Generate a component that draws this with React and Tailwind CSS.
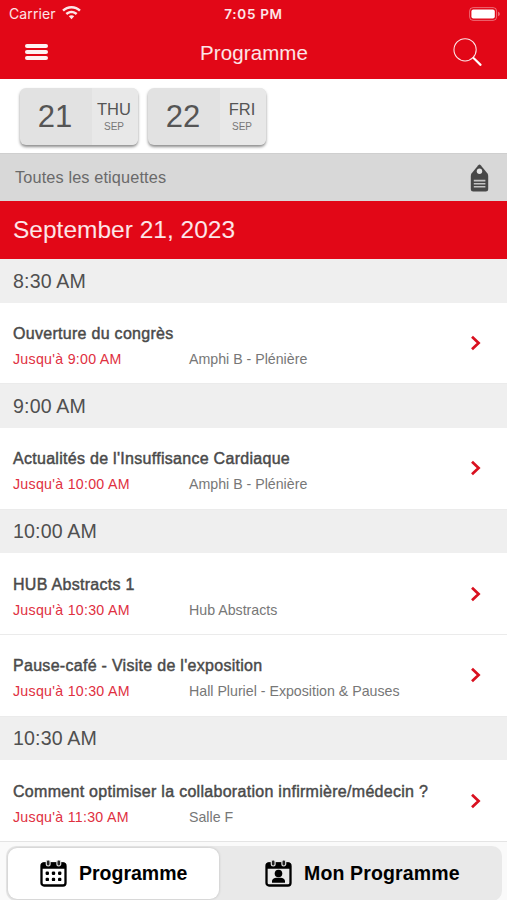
import React, { useState } from "react";

const schedule = [
  {
    time: "8:30 AM",
    sessions: [
      { title: "Ouverture du congrès", until: "9:00 AM", room: "Amphi B - Plénière" },
    ],
  },
  {
    time: "9:00 AM",
    sessions: [
      { title: "Actualités de l'Insuffisance Cardiaque", until: "10:00 AM", room: "Amphi B - Plénière" },
    ],
  },
  {
    time: "10:00 AM",
    sessions: [
      { title: "HUB Abstracts 1", until: "10:30 AM", room: "Hub Abstracts" },
      { title: "Pause-café - Visite de l'exposition", until: "10:30 AM", room: "Hall Pluriel - Exposition & Pauses" },
    ],
  },
  {
    time: "10:30 AM",
    sessions: [
      { title: "Comment optimiser la collaboration infirmière/médecin ?", until: "11:30 AM", room: "Salle F" },
    ],
  },
];

const days = [
  { day: "21", name: "THU", month: "SEP" },
  { day: "22", name: "FRI", month: "SEP" },
];

const StatusBar = () => (
  <div className="grid h-[27px] grid-cols-3 items-center px-[9px] font-['Inter',sans-serif] text-white/90">
    <div className="flex items-center gap-[6px]">
      <span className="text-[14px] tracking-[0.1px]">Carrier</span>
      <svg className="-mt-px h-[14px] w-[19px]" viewBox="0 0 19 14" fill="currentColor">
        <path d="M9.500 0C5.900 0 2.600 1.400.2 3.700l1.700 1.800C3.900 3.600 6.600 2.500 9.500 2.500s5.600 1.100 7.600 3l1.700-1.800C16.400 1.400 13.100 0 9.500 0Z" />
        <path d="M9.500 4.700c-2.300 0-4.400.9-6 2.400l1.700 1.800c1.100-1.100 2.600-1.700 4.300-1.700s3.200.6 4.300 1.700l1.700-1.800c-1.600-1.500-3.700-2.400-6-2.400Z" />
        <path d="M9.500 9.200c-1.100 0-2 .4-2.700 1.100l2.700 3 2.700-3c-.7-.7-1.600-1.100-2.700-1.100Z" />
      </svg>
    </div>
    <span className="pt-px text-center text-[13.500px] font-semibold tracking-[0.700px]">7:05 PM</span>
    <svg className="-mr-[3px] h-[14px] w-[32px] justify-self-end" viewBox="0 0 32 14">
      <rect x="0.600" y="0.600" width="27" height="12.800" rx="3.500" fill="none" stroke="#fff" strokeOpacity="0.4" />
      <rect x="2.400" y="2.400" width="23.400" height="9.200" rx="2" fill="#fff" />
      <path d="M29.200 4.800v4.400c1.100-.4 1.500-1.200 1.500-2.200s-.4-1.800-1.500-2.200Z" fill="#fff" fillOpacity="0.5" />
    </svg>
  </div>
);

const NavBar = () => (
  <div className="flex h-[52px] items-center justify-between pr-[25px] pl-[25px] text-white">
    <button aria-label="Menu" className="-mt-[2px] flex w-[30px] flex-col gap-[2px]">
      <span className="h-[4px] w-[23px] rounded-[2px] bg-white/95" />
      <span className="h-[4px] w-[23px] rounded-[2px] bg-white/95" />
      <span className="h-[4px] w-[23px] rounded-[2px] bg-white/95" />
    </button>
    <h1 className="text-[20.500px] tracking-[0.1px] text-white/90">Programme</h1>
    <button aria-label="Rechercher" className="-mt-px">
      <svg className="h-[29px] w-[29px]" viewBox="0 0 30 30" fill="none" stroke="currentColor">
        <circle cx="12.500" cy="12.200" r="11.500" strokeWidth="1.100" strokeOpacity="0.9" />
        <path d="m20.500 20 1.800 1.800" strokeWidth="1.200" />
        <path d="m21.500 21 7 6.800" strokeWidth="2.200" strokeLinecap="round" />
      </svg>
    </button>
  </div>
);

const DayCard = ({ day, name, month }) => (
  <button className="flex h-[57px] w-[118px] overflow-hidden rounded-[6px] bg-[#e2e2e2] text-[#555] shadow-[0_2px_3px_rgba(0,0,0,0.45)]">
    <span className="flex h-full w-[72px] items-center justify-center pt-[2px] pr-[2px] text-[31px]">{day}</span>
    <span className="flex h-full w-[46px] flex-col items-center bg-[#e8e8e8] pt-[11px] pr-[2px]">
      <span className="text-[16.500px] leading-[20px]">{name}</span>
      <span className="mt-[2px] text-[10px] leading-[12px] text-[#777]">{month}</span>
    </span>
  </button>
);

const SessionRow = ({ title, until, room }) => (
  <div className="flex h-[81.850px] items-center border-b border-[#ebebeb] pr-[25px] pl-[13px]">
    <div className="flex-1 pt-[7px]">
      <h3 className="text-[16px] leading-[20px] tracking-[0.290px] whitespace-nowrap text-[#4a4a4a] [-webkit-text-stroke:0.450px_#4a4a4a]">
        {title}
      </h3>
      <div className="mt-[5px] flex text-[14.200px] leading-[20px]">
        <span className="w-[176px] tracking-[0.280px] text-[#e0303f]">Jusqu'à {until}</span>
        <span className="text-[#777]">{room}</span>
      </div>
    </div>
    <svg className="h-[16px] w-[12px]" viewBox="0 0 12 16" fill="none" stroke="#d9101f" strokeWidth="2.700">
      <path d="m2 1.700 6.600 6.300L2 14.300" />
    </svg>
  </div>
);

const CalendarIcon = ({ person = false }) => (
  <svg className="h-[27px] w-[27px]" viewBox="0 0 27 27">
    <rect x="1.500" y="3.500" width="24" height="22" rx="2.500" fill="none" stroke="#000" strokeWidth="2.300" />
    <path d="M1.500 8.800V4.500q0-2 2-2h20q2 0 2 2v4.300Z" fill="#000" />
    {/* binder rings */}
    <rect x="6.300" y="-0.200" width="3.800" height="6.200" rx="1.900" fill="#222" stroke="#ddd" strokeWidth="1.200" />
    <rect x="16.900" y="-0.200" width="3.800" height="6.200" rx="1.900" fill="#222" stroke="#ddd" strokeWidth="1.200" />
    {person ? (
      <>
        <circle cx="13.500" cy="13.500" r="3.800" fill="#000" />
        <path d="M7 22.800v-1.800c0-2 2-3 4.500-3.300h4c2.500.3 4.500 1.300 4.500 3.300v1.800Z" fill="#000" />
      </>
    ) : (
      [7.3, 13.5, 19.7].map((x) => (
        <g key={x}>
          <rect x={x - 1.7} y="11.600" width="3.400" height="3.400" rx="1.200" />
          <rect x={x - 1.7} y="17.700" width="3.400" height="3.400" rx="1.200" />
        </g>
      ))
    )}
  </svg>
);

const BottomTabs = ({ active, onChange }) => (
  <nav className="h-[59px] shrink-0 border-t border-[#e4e4e4] bg-[#fafafa] pt-[4px] pr-[5px] pl-[6px]">
    <div className="flex h-[55px] rounded-[10px] bg-[#e9e9e9] p-[2px] text-[19.500px] font-bold text-black">
      <button
        onClick={() => onChange("all")}
        className={
          active === "all"
            ? "flex w-[211px] items-center gap-[12px] rounded-[9px] bg-white pl-[32px] shadow-[0_0_3px_rgba(0,0,0,0.2)]"
            : "flex w-[211px] items-center gap-[12px] rounded-[9px] pl-[32px]"
        }
      >
        <CalendarIcon />
        Programme
      </button>
      <button
        onClick={() => onChange("mine")}
        className={
          active === "mine"
            ? "flex flex-1 items-center gap-[12px] rounded-[9px] bg-white pl-[46px] shadow-[0_0_3px_rgba(0,0,0,0.2)]"
            : "flex flex-1 items-center gap-[12px] rounded-[9px] pl-[46px]"
        }
      >
        <CalendarIcon person />
        <span className="tracking-[0.150px]">Mon Programme</span>
      </button>
    </div>
  </nav>
);

export default function App() {
  const [tab, setTab] = useState("all");

  return (
    <div className="flex h-screen w-full flex-col overflow-hidden bg-white font-['Liberation_Sans',Arial,sans-serif]">
      <header className="h-[79px] shrink-0 bg-[#e20717]">
        <StatusBar />
        <NavBar />
      </header>

      {/* Day picker */}
      <div className="flex h-[74px] shrink-0 gap-[10px] pt-[9px] pl-[20px]">
        {days.map((d) => (
          <DayCard key={d.day} {...d} />
        ))}
      </div>

      {/* Tag filter */}
      <div className="flex h-[48px] shrink-0 items-center justify-between border-t border-[#cfcfcf] bg-[#d8d8d8] pr-[18px] pl-[15px]">
        <span className="text-[16.300px] tracking-[0.130px] text-[#6a6a6a]">Toutes les etiquettes</span>
        <svg className="mt-px h-[28px] w-[19px]" viewBox="0 0 19 28">
          <path
            d="M8.300 1.200q1.200-1.300 2.400 0L17.300 9.300q.9 1.200.9 2.700v13q0 2.500-2.500 2.500H3.300Q.8 27.500.8 25V12q0-1.500.9-2.700Z"
            fill="#484848"
          />
          <circle cx="9.500" cy="7.200" r="2.700" fill="#e4e4e4" />
          <path d="M3.800 16.600h11.600M3.800 19.700h11.600M3.800 22.800h11.600" stroke="#c4c4c4" strokeWidth="1.600" />
        </svg>
      </div>

      <main className="min-h-0 flex-1 overflow-hidden">
        <h2 className="flex h-[58px] items-center bg-[#e20717] pl-[13px] text-[24.500px] text-white/90">
          September 21, 2023
        </h2>
        {schedule.map((slot) => (
          <section key={slot.time}>
            <div className="flex h-[43.500px] items-center bg-[#efefef] pt-px pl-[13px] text-[19.600px] tracking-[0.150px] text-[#505050]">
              {slot.time}
            </div>
            {slot.sessions.map((s) => (
              <SessionRow key={s.title} {...s} />
            ))}
          </section>
        ))}
      </main>

      <BottomTabs active={tab} onChange={setTab} />
    </div>
  );
}
